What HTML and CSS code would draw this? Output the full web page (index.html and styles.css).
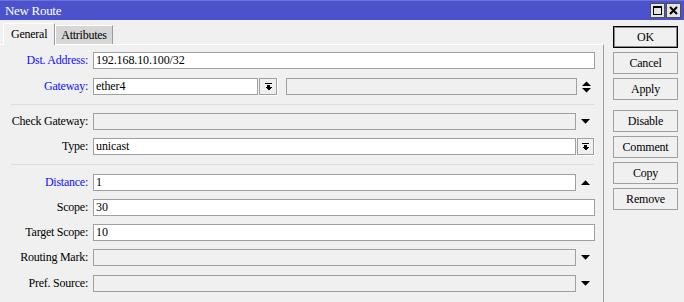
FILE: index.html
```html
<!DOCTYPE html>
<html>
<head>
<meta charset="utf-8">
<title>New Route</title>
<link rel="stylesheet" href="styles.css">
</head>
<body>
<div class="window">
  <div class="titlebar">
    <span class="title">New Route</span>
    <div class="wbtns">
      <span class="wbtn"><svg width="9" height="9" viewBox="0 0 9 9" shape-rendering="crispEdges"><rect x="0.5" y="0.5" width="8" height="8" fill="none" stroke="#000"/><rect x="0" y="0" width="9" height="2" fill="#000"/></svg></span>
      <span class="wbtn"><svg width="9" height="9" viewBox="0 0 9 9"><path d="M1 1 L8 8 M8 1 L1 8" stroke="#000" stroke-width="2"/></svg></span>
    </div>
  </div>
  <div class="content">
    <div class="main">
      <div class="tabs">
        <div class="tab active">General</div>
        <div class="tab">Attributes</div>
      </div>
      <div class="panel">
        <div class="row r-first">
          <label class="lbl blue">Dst. Address:</label>
          <div class="inp w-full">192.168.10.100/32</div>
        </div>
        <div class="row r-9">
          <label class="lbl blue">Gateway:</label>
          <div class="inp w-gw">ether4</div>
          <span class="ddbtn w-ddgw"><svg width="7" height="8" viewBox="0 0 7 8" shape-rendering="crispEdges"><rect x="0" y="0" width="7" height="1" fill="#000"/><rect x="2" y="2" width="3" height="2" fill="#000"/><polygon points="0,4 7,4 3.5,7.5" fill="#000"/></svg></span>
          <div class="inp dis w-gw2"></div>
          <span class="slot"><svg width="9" height="12" viewBox="0 0 9 12"><polygon points="0,5 9,5 4.5,0.5" fill="#000"/><polygon points="0,7 9,7 4.5,11.5" fill="#000"/></svg></span>
        </div>
        <div class="sep"></div>
        <div class="row r-after-sep">
          <label class="lbl">Check Gateway:</label>
          <div class="inp dis w-arr"></div>
          <span class="slot"><svg width="9" height="5" viewBox="0 0 9 5"><polygon points="0,0 9,0 4.5,4.8" fill="#000"/></svg></span>
        </div>
        <div class="row">
          <label class="lbl">Type:</label>
          <div class="inp w-arr">unicast</div>
          <span class="ddbtn w-ddtype"><svg width="7" height="8" viewBox="0 0 7 8" shape-rendering="crispEdges"><rect x="0" y="0" width="7" height="1" fill="#000"/><rect x="2" y="2" width="3" height="2" fill="#000"/><polygon points="0,4 7,4 3.5,7.5" fill="#000"/></svg></span>
        </div>
        <div class="sep"></div>
        <div class="row r-after-sep2">
          <label class="lbl blue">Distance:</label>
          <div class="inp w-arr">1</div>
          <span class="slot"><svg width="9" height="5" viewBox="0 0 9 5"><polygon points="0,5 9,5 4.5,0.2" fill="#000"/></svg></span>
        </div>
        <div class="row">
          <label class="lbl">Scope:</label>
          <div class="inp w-full">30</div>
        </div>
        <div class="row">
          <label class="lbl">Target Scope:</label>
          <div class="inp w-full">10</div>
        </div>
        <div class="row">
          <label class="lbl">Routing Mark:</label>
          <div class="inp dis w-arr"></div>
          <span class="slot"><svg width="9" height="5" viewBox="0 0 9 5"><polygon points="0,0 9,0 4.5,4.8" fill="#000"/></svg></span>
        </div>
        <div class="row r-9">
          <label class="lbl">Pref. Source:</label>
          <div class="inp dis w-arr"></div>
          <span class="slot"><svg width="9" height="5" viewBox="0 0 9 5"><polygon points="0,0 9,0 4.5,4.8" fill="#000"/></svg></span>
        </div>
      </div>
    </div>
    <div class="actions">
      <button class="btn default">OK</button>
      <button class="btn">Cancel</button>
      <button class="btn">Apply</button>
      <button class="btn group">Disable</button>
      <button class="btn">Comment</button>
      <button class="btn">Copy</button>
      <button class="btn">Remove</button>
    </div>
  </div>
</div>
</body>
</html>
```

FILE: styles.css
```css
html, body {
  margin: 0;
  padding: 0;
}
body {
  background: #f0f0f0;
  font-family: "Liberation Serif", "Times New Roman", serif;
  font-size: 12px;
  letter-spacing: -0.25px;
  color: #000;
  width: 684px;
  height: 302px;
  overflow: hidden;
}
.window {
  display: flex;
  flex-direction: column;
  height: 302px;
}
.titlebar {
  box-sizing: border-box;
  height: 20px;
  background: #4b52cc;
  border-top: 1px solid #6b71d8;
  display: flex;
  align-items: center;
  justify-content: space-between;
  padding: 0 3px 0 5px;
  color: #fff;
}
.title {
  font-size: 13px;
  letter-spacing: -0.3px;
}
.wbtns {
  display: flex;
  gap: 1px;
}
.wbtn {
  box-sizing: border-box;
  width: 15px;
  height: 15px;
  background: #e4e4e4;
  border: 1px solid #505050;
  display: flex;
  align-items: center;
  justify-content: center;
}
.content {
  display: flex;
  gap: 9px;
  flex: 1;
}
.main {
  width: 604px;
  display: flex;
  flex-direction: column;
}
.tabs {
  height: 24px;
  display: flex;
  align-items: flex-end;
  padding-left: 3px;
  box-sizing: border-box;
}
.tab {
  box-sizing: border-box;
  height: 19px;
  padding: 2px 5px 0 5px;
  background: #d6d6d6;
  border-top: 1px solid #fff;
  border-left: 1px solid #fff;
  border-right: 1px solid #9a9a9a;
  line-height: 15px;
}
.tab.active {
  height: 22px;
  margin-bottom: -1px;
  padding: 3px 7px 0 7px;
  background: #f0f0f0;
  position: relative;
  z-index: 1;
}
.panel {
  flex: 1;
  border-top: 1px solid #fff;
  border-right: 1px solid #a0a0a0;
  padding-top: 7px;
  display: flex;
  flex-direction: column;
}
.row {
  display: flex;
  align-items: center;
  height: 17px;
  margin-top: 8px;
}
.row.r-first { margin-top: 0; }
.row.r-9 { margin-top: 9px; }
.row.r-after-sep { margin-top: 8px; }
.row.r-after-sep2 { margin-top: 9px; }
.lbl {
  width: 88px;
  text-align: right;
  margin-right: 5px;
  flex: none;
  white-space: nowrap;
}
.lbl.blue {
  color: #1010ff;
}
.inp {
  box-sizing: border-box;
  height: 17px;
  border: 1px solid #a0a0a0;
  background: #fff;
  padding-left: 2px;
  line-height: 15px;
  flex: none;
  white-space: nowrap;
  letter-spacing: -0.1px;
}
.inp.dis {
  background: #f0f0f0;
}
.w-full { width: 502px; }
.w-arr { width: 483px; }
.w-gw { width: 165px; }
.w-gw2 { width: 291px; margin-left: 9px; }
.ddbtn {
  box-sizing: border-box;
  height: 17px;
  border: 1px solid #a0a0a0;
  background: #f0f0f0;
  box-shadow: 1px 1px 0 #fff;
  margin-left: 1px;
  display: flex;
  align-items: center;
  justify-content: center;
  flex: none;
}
.w-ddgw { width: 18px; }
.w-ddtype { width: 17px; }
.slot {
  width: 19px;
  height: 17px;
  display: flex;
  align-items: center;
  justify-content: center;
  flex: none;
}
.sep {
  height: 1px;
  background: #dcdcdc;
  margin: 9px 0 0 11px;
  width: 583px;
}
.actions {
  display: flex;
  flex-direction: column;
  gap: 4px;
  padding-top: 6px;
}
.btn {
  box-sizing: border-box;
  width: 65px;
  height: 22px;
  border: 1px solid #a0a0a0;
  background: #f0f0f0;
  font-family: "Liberation Serif", "Times New Roman", serif;
  font-size: 12px;
  letter-spacing: -0.2px;
  color: #000;
  padding: 0;
  margin: 0;
}
.btn.default {
  border: 1px solid #000;
  box-shadow: inset 0 0 0 1px #8a8a8a;
}
.btn.group {
  margin-top: 6px;
}
```
